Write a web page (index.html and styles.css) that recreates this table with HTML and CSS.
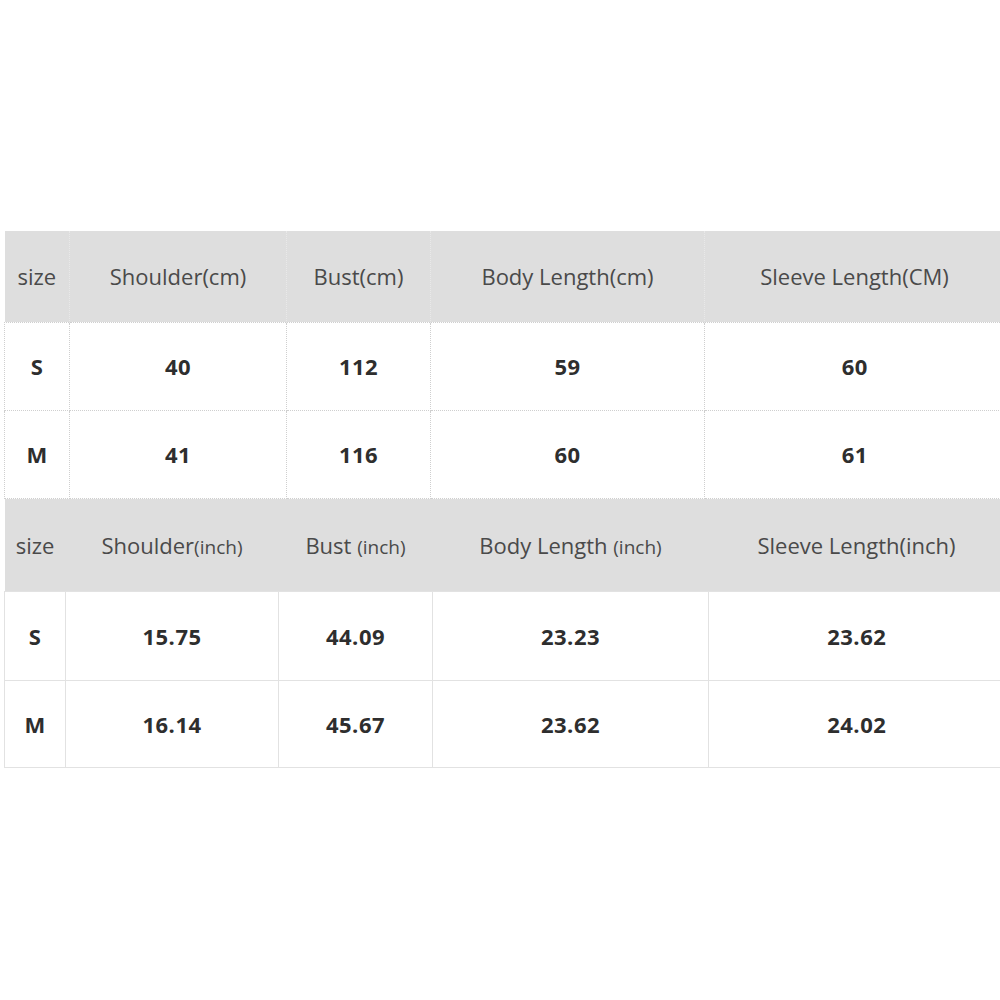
FILE: index.html
```html
<!DOCTYPE html>
<html>
<head>
<meta charset="utf-8">
<link rel="stylesheet" href="styles.css">
</head>
<body>
<div class="sheet">
<table class="chart chart-cm">
<colgroup><col class="c1"><col class="c2"><col class="c3"><col class="c4"><col class="c5"></colgroup>
<tr class="head"><th>size</th><th>Shoulder(cm)</th><th>Bust(cm)</th><th>Body Length(cm)</th><th>Sleeve Length(CM)</th></tr>
<tr class="row"><td>S</td><td>40</td><td>112</td><td>59</td><td>60</td></tr>
<tr class="row"><td>M</td><td>41</td><td>116</td><td>60</td><td>61</td></tr>
</table>
<table class="chart chart-inch">
<colgroup><col class="d1"><col class="d2"><col class="d3"><col class="d4"><col class="d5"></colgroup>
<tr class="head"><th>size</th><th>Shoulder<span class="unit">(inch)</span></th><th>Bust <span class="unit">(inch)</span></th><th>Body Length <span class="unit">(inch)</span></th><th>Sleeve Length(inch)</th></tr>
<tr class="row r1"><td>S</td><td>15.75</td><td>44.09</td><td>23.23</td><td>23.62</td></tr>
<tr class="row r2"><td>M</td><td>16.14</td><td>45.67</td><td>23.62</td><td>24.02</td></tr>
</table>
</div>
</body>
</html>
```
FILE: styles.css
```css
html, body {
  margin: 0;
  padding: 0;
  background: #fff;
  overflow: hidden;
}
.sheet {
  padding: 231px 0 0 4px;
  width: 1010px;
  font-family: "Open Sans", "Noto Sans", sans-serif;
}
.chart {
  border-collapse: collapse;
  table-layout: fixed;
  width: 1000px;
}
.chart th, .chart td {
  padding: 0;
  text-align: center;
  vertical-align: middle;
}
.chart th {
  background: #dedede;
  color: #4a4a4a;
  font-weight: 400;
  font-size: 22px;
}
.chart td {
  color: #2e2e2e;
  font-weight: 700;
  font-size: 22px;
  letter-spacing: 0.5px;
}
.c1 { width: 65px; }
.c2 { width: 217px; }
.c3 { width: 144px; }
.c4 { width: 274px; }
.c5 { width: 300px; }
.d1 { width: 61px; }
.d2 { width: 213px; }
.d3 { width: 154px; }
.d4 { width: 276px; }
.d5 { width: 296px; }

.chart-cm .head { height: 91px; }
.chart-cm .head th { border-right: 1px dotted #e9e9e9; }
.chart-cm .row { height: 88px; }
.chart-cm td { border: 1px dotted #cfcfcf; }
.chart-cm td:last-child { border-right: none; }

.chart-inch .head { height: 93px; }
.chart-inch .r1 { height: 89px; }
.chart-inch .r2 { height: 87px; }
.chart-inch td { border: 1px solid #e2e2e2; }
.chart-inch td:last-child { border-right: none; }
.unit { font-size: 19px; }
```
